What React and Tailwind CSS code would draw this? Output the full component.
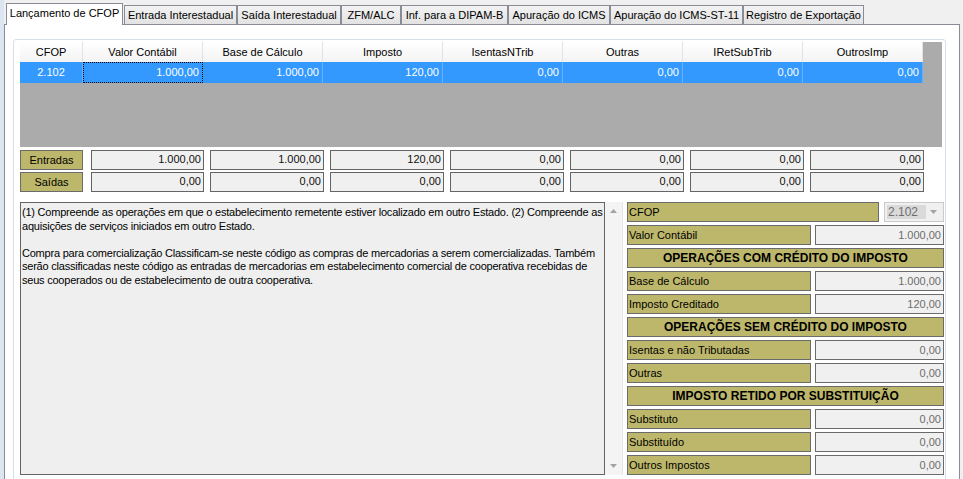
import React from 'react'

const tabs = [
  { t: 'Entrada Interestadual', w: 'w-[113px]' },
  { t: 'Saída Interestadual', w: 'w-[104px]' },
  { t: 'ZFM/ALC', w: 'w-[60px]' },
  { t: 'Inf. para a DIPAM-B', w: 'w-[107px]' },
  { t: 'Apuração do ICMS', w: 'w-[102px]' },
  { t: 'Apuração do ICMS-ST-11', w: 'w-[133px]' },
  { t: 'Registro de Exportação', w: 'w-[121px]' },
]

const cols = [
  { h: 'CFOP', v: '2.102', w: 'w-[63px]' },
  { h: 'Valor Contábil', v: '1.000,00', w: 'w-[120px]', focus: true },
  { h: 'Base de Cálculo', v: '1.000,00', w: 'w-[120px]' },
  { h: 'Imposto', v: '120,00', w: 'w-[120px]' },
  { h: 'IsentasNTrib', v: '0,00', w: 'w-[120px]' },
  { h: 'Outras', v: '0,00', w: 'w-[120px]' },
  { h: 'IRetSubTrib', v: '0,00', w: 'w-[120px]' },
  { h: 'OutrosImp', v: '0,00', w: 'w-[120px]' },
]

const entradas = ['1.000,00', '1.000,00', '120,00', '0,00', '0,00', '0,00', '0,00']
const saidas = ['0,00', '0,00', '0,00', '0,00', '0,00', '0,00', '0,00']

function TotalRow({ label, values }) {
  return (
    <div className="flex h-[20px]">
      <div className="w-[63px] bg-[#bdb76b] border border-[#6b6b6b] flex items-center justify-center">{label}</div>
      {values.map((v, i) => (
        <div
          key={i}
          className={(i === 0 ? 'ml-[8px] w-[113px]' : 'ml-[6px] w-[114px]') + ' bg-[#f0f0f0] border border-[#646464] flex items-center justify-end pr-[2px] pb-[2px] text-[#111]'}
        >
          {v}
        </div>
      ))}
    </div>
  )
}

function Field({ label, value }) {
  return (
    <div className="flex h-[20px] gap-[4px]">
      <div className="w-[184px] bg-[#bdb76b] border border-[#6b6b6b] flex items-center pl-[1px]">{label}</div>
      <div className="w-[129px] bg-[#f0f0f0] border border-[#6b6b6b] flex items-center justify-end pr-[2px] text-[#6d6d6d]">{value}</div>
    </div>
  )
}

function Section({ children }) {
  return (
    <div className="h-[20px] bg-[#bdb76b] border border-[#6b6b6b] flex items-center justify-center font-bold text-[12px]">{children}</div>
  )
}

function Arrow({ down }) {
  return (
    <svg width="7" height="4" viewBox="0 0 7 4">
      <path d={down ? 'M0 0 H7 L3.5 4 Z' : 'M0 4 H7 L3.5 0 Z'} fill="#a3a3a3" />
    </svg>
  )
}

export default function App() {
  return (
    <div className="w-[963px] h-[479px] overflow-hidden bg-[#f0f0f0] border-l-[4px] border-[#dce6f3] pr-[3px] pt-[3px] flex flex-col font-['Liberation_Sans',Arial,sans-serif] text-[11px] text-black">
      {/* tab strip */}
      <div className="flex items-end h-[21px] pl-[2px] relative z-10 whitespace-nowrap">
        <div className="w-[117px] h-[22px] -mb-px bg-white border border-b-0 border-[#898c95] flex items-center justify-center pb-[2px] shrink-0">
          Lançamento de CFOP
        </div>
        <div className="flex ml-[1px]">
          {tabs.map((t) => (
            <div
              key={t.t}
              className={t.w + ' h-[19px] shrink-0 bg-linear-to-b from-[#f3f3f3] to-[#e2e2e2] border border-b-0 border-[#898c95] flex items-center justify-center'}
            >
              {t.t}
            </div>
          ))}
        </div>
      </div>

      {/* tab page */}
      <div className="flex-1 bg-white border border-[#898c95] pt-[14px] pl-[8px] pr-[13px]">
        <div className="h-[460px] border border-[#d5dfe5] rounded-[3px] pl-[6px] pt-[2px]">
          {/* grid */}
          <div className="w-[922px] h-[105px] bg-[#ababab]">
            <div className="flex h-[20px]">
              {cols.map((c) => (
                <div key={c.h} className={c.w + ' bg-linear-to-b from-white to-[#f3f3f3] border-r border-[#e2e2e2] flex items-center justify-center'}>
                  {c.h}
                </div>
              ))}
            </div>
            <div className="flex h-[21px] bg-[#3399ff] text-white w-[903px]">
              {cols.map((c, i) => (
                <div
                  key={c.h}
                  className={
                    c.w +
                    ' flex items-center ' +
                    (i === 0 ? 'justify-center ' : 'justify-end pr-[3px] ') +
                    (c.focus ? 'border border-dotted border-black' : 'border-r border-[#68b0f8]')
                  }
                >
                  {c.v}
                </div>
              ))}
            </div>
          </div>

          {/* totals */}
          <div className="mt-[3px]">
            <TotalRow label="Entradas" values={entradas} />
          </div>
          <div className="mt-[2px]">
            <TotalRow label="Saídas" values={saidas} />
          </div>

          {/* bottom */}
          <div className="flex mt-[10px]">
            <div className="w-[585px] h-[273px] bg-[#efefef] border border-[#646464] pl-[1px] pt-[3px] leading-[13.6px] whitespace-nowrap tracking-[-0.22px] overflow-hidden">
              <div>(1) Compreende as operações em que o estabelecimento remetente estiver localizado em outro Estado. (2) Compreende as</div>
              <div>aquisições de serviços iniciados em outro Estado.</div>
              <div>&nbsp;</div>
              <div>Compra para comercialização Classificam-se neste código as compras de mercadorias a serem comercializadas. Também</div>
              <div>serão classificadas neste código as entradas de mercadorias em estabelecimento comercial de cooperativa recebidas de</div>
              <div>seus cooperados ou de estabelecimento de outra cooperativa.</div>
            </div>
            <div className="w-[18px] h-[273px] bg-[#f4f4f4] border-r border-[#e6e6e6] flex flex-col items-center justify-between pt-[7px] pb-[7px]">
              <Arrow />
              <Arrow down />
            </div>
            <div className="ml-[4px] w-[317px] flex flex-col gap-[3px]">
              <div className="flex h-[20px] gap-[5px]">
                <div className="w-[252px] bg-[#bdb76b] border border-[#6b6b6b] flex items-center pl-[1px]">CFOP</div>
                <div className="w-[60px] bg-[#f0f0f0] border border-[#cacaca] flex items-center pl-[2px] pr-[6px]">
                  <span className="bg-[#dadada] text-[#6d6d6d] text-[12px] w-[39px] h-[14px] flex items-center pl-[1px]">2.102</span>
                  <span className="ml-auto flex"><Arrow down /></span>
                </div>
              </div>
              <Field label="Valor Contábil" value="1.000,00" />
              <Section>OPERAÇÕES COM CRÉDITO DO IMPOSTO</Section>
              <Field label="Base de Cálculo" value="1.000,00" />
              <Field label="Imposto Creditado" value="120,00" />
              <Section>OPERAÇÕES SEM CRÉDITO DO IMPOSTO</Section>
              <Field label="Isentas e não Tributadas" value="0,00" />
              <Field label="Outras" value="0,00" />
              <Section>IMPOSTO RETIDO POR SUBSTITUIÇÃO</Section>
              <Field label="Substituto" value="0,00" />
              <Field label="Substituído" value="0,00" />
              <Field label="Outros Impostos" value="0,00" />
            </div>
          </div>
        </div>
      </div>
    </div>
  )
}
